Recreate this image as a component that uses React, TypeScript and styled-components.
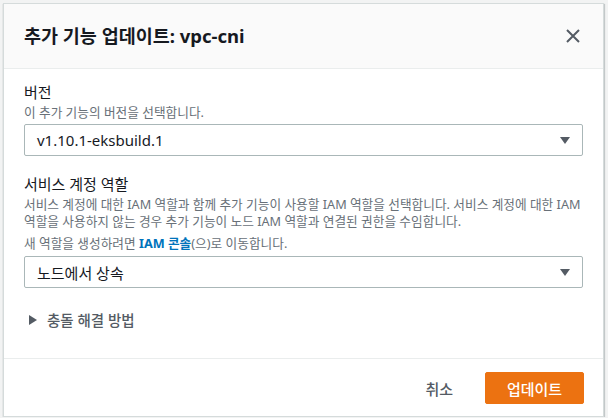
import React, { useState } from "react";
import styled, { createGlobalStyle } from "styled-components";

const FONT = `"Noto Sans", "Noto Sans CJK KR", sans-serif`;

const GlobalStyle = createGlobalStyle`
  html, body {
    margin: 0;
    background: #f2f3f3;
    font-family: ${FONT};
    color: #16191f;
  }
  * { box-sizing: border-box; }
`;

const Page = styled.div`
  padding: 3px 4px 0 3px;
`;

const Modal = styled.div`
  width: 601px;
  background: #fff;
  border: 1px solid #d5dbdb;
  box-shadow: 0 1px 1px 0 rgba(0, 28, 36, 0.3), 1px 1px 1px 0 rgba(0, 28, 36, 0.15);
`;

const Header = styled.div`
  height: 65px;
  display: flex;
  align-items: center;
  justify-content: space-between;
  padding: 0 21px 0 20px;
  background: #fafafa;
  border-bottom: 1px solid #eaeded;
`;

const Title = styled.h2`
  margin: 0;
  font-size: 18.5px;
  font-weight: 700;
  line-height: 22px;
`;

const CloseButton = styled.button`
  border: 0;
  background: none;
  padding: 0;
  width: 18px;
  height: 18px;
  display: flex;
  align-items: center;
  justify-content: center;
  cursor: pointer;
`;

const Body = styled.div`
  padding: 12px 20px 27px 20px;
  display: flex;
  flex-direction: column;
`;

const Field = styled.div<{ $gap?: number }>`
  display: flex;
  flex-direction: column;
  margin-bottom: ${(p) => p.$gap ?? 0}px;
`;

const Label = styled.div`
  font-size: 15px;
  line-height: 22px;
`;

const Description = styled.div<{ $mt?: number; $mb?: number }>`
  font-size: 12.7px;
  line-height: 17px;
  color: #687078;
  margin-top: ${(p) => p.$mt ?? 1}px;
  margin-bottom: ${(p) => p.$mb ?? 3}px;
`;

const DescLine = styled.span`
  display: block;
`;

const Link = styled.a`
  color: #0073bb;
  font-weight: 700;
  text-decoration: none;
`;

const SelectBox = styled.div`
  height: 32px;
  border: 1px solid #aab7b8;
  border-radius: 2px;
  display: flex;
  align-items: center;
  justify-content: space-between;
  padding: 0 12px;
  font-size: 15px;
  cursor: pointer;
`;

const Caret = styled.span`
  width: 0;
  height: 0;
  border-left: 5px solid transparent;
  border-right: 5px solid transparent;
  border-top: 7px solid #545b64;
`;

const Expander = styled.button`
  margin-top: 21px;
  border: 0;
  background: none;
  padding: 0 0 0 5px;
  display: flex;
  align-items: center;
  gap: 10px;
  font-family: ${FONT};
  font-size: 14.5px;
  font-weight: 500;
  line-height: 22px;
  color: #545b64;
  cursor: pointer;
`;

const ExpandArrow = styled.span<{ $open: boolean }>`
  width: 0;
  height: 0;
  border-top: 5px solid transparent;
  border-bottom: 5px solid transparent;
  border-left: 8px solid #545b64;
  transform: rotate(${(p) => (p.$open ? 90 : 0)}deg);
`;

const Footer = styled.div`
  border-top: 1px solid #eaeded;
  padding: 13px 19px 12px 20px;
  display: flex;
  justify-content: flex-end;
  align-items: center;
  gap: 11px;
`;

const Button = styled.button<{ $primary?: boolean }>`
  height: 32px;
  padding: 0 20px;
  border-radius: 2px;
  font-family: ${FONT};
  font-size: 15px;
  font-weight: 500;
  cursor: pointer;
  border: 1px solid ${(p) => (p.$primary ? "#ec7211" : "transparent")};
  background: ${(p) => (p.$primary ? "#ec7211" : "transparent")};
  color: ${(p) => (p.$primary ? "#fff" : "#545b64")};
  min-width: ${(p) => (p.$primary ? "99px" : "0")};
`;

export default function App() {
  const [open, setOpen] = useState(false);

  return (
    <>
      <GlobalStyle />
      <Page>
        <Modal>
          <Header>
            <Title>추가 기능 업데이트: vpc-cni</Title>
            <CloseButton aria-label="닫기">
              <svg width="16" height="16" viewBox="0 0 16 16">
                <path d="M2 2 L14 14 M14 2 L2 14" stroke="#545b64" strokeWidth="2" fill="none" />
              </svg>
            </CloseButton>
          </Header>
          <Body>
            <Field $gap={17}>
              <Label>버전</Label>
              <Description>이 추가 기능의 버전을 선택합니다.</Description>
              <SelectBox>
                <span>v1.10.1-eksbuild.1</span>
                <Caret />
              </SelectBox>
            </Field>
            <Field>
              <Label>서비스 계정 역할</Label>
              <Description $mt={1} $mb={5}>
                <DescLine>
                  서비스 계정에 대한 IAM 역할과 함께 추가 기능이 사용할 IAM 역할을 선택합니다. 서비스 계정에 대한 IAM
                </DescLine>
                <DescLine>역할을 사용하지 않는 경우 추가 기능이 노드 IAM 역할과 연결된 권한을 수임합니다.</DescLine>
              </Description>
              <Description $mt={0} $mb={4}>
                새 역할을 생성하려면 <Link href="#">IAM 콘솔</Link>(으)로 이동합니다.
              </Description>
              <SelectBox>
                <span>노드에서 상속</span>
                <Caret />
              </SelectBox>
            </Field>
            <Expander onClick={() => setOpen(!open)}>
              <ExpandArrow $open={open} />
              충돌 해결 방법
            </Expander>
          </Body>
          <Footer>
            <Button>취소</Button>
            <Button $primary>업데이트</Button>
          </Footer>
        </Modal>
      </Page>
    </>
  );
}
